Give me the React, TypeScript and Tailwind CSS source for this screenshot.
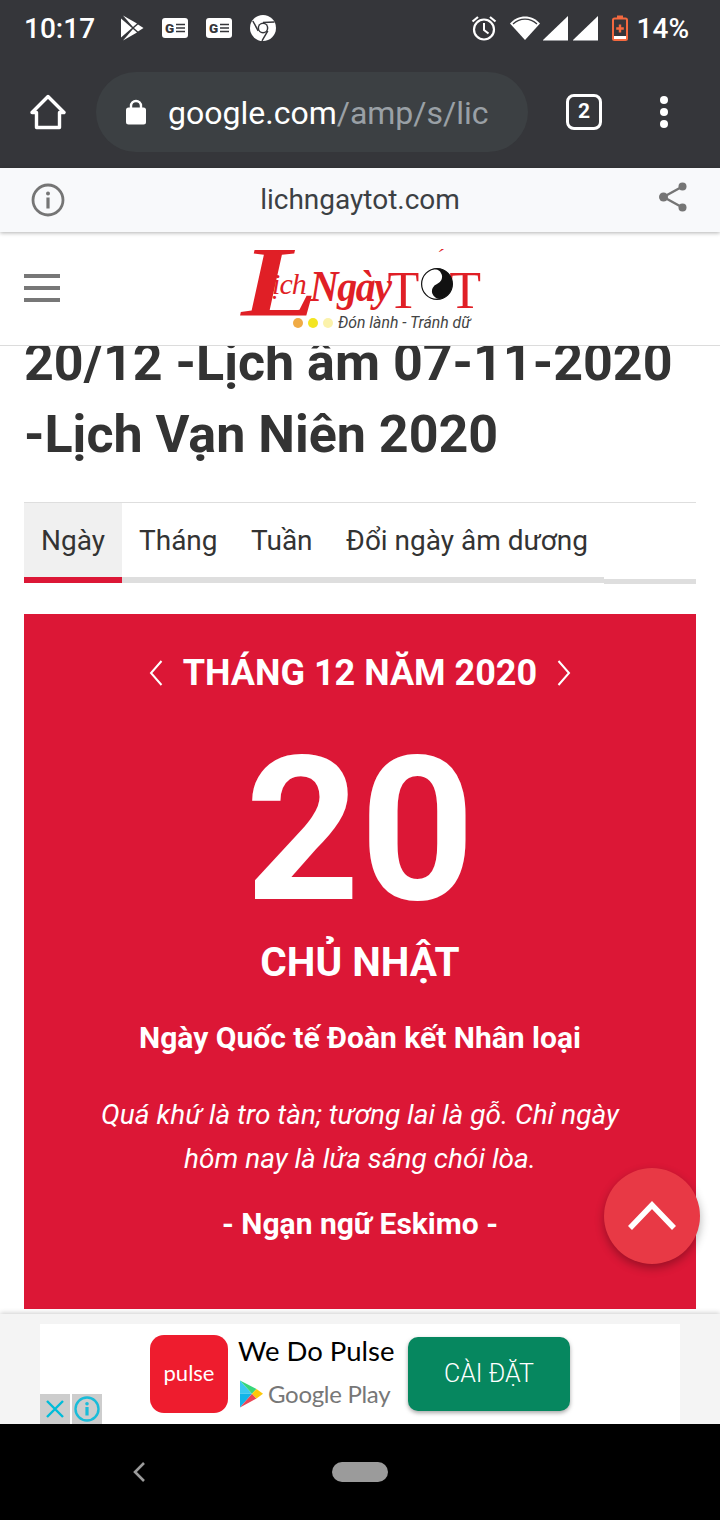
import React from 'react';

const PlayStoreIcon = () => (
  <svg width="24" height="26" viewBox="0 0 24 26">
    <path d="M1 3.5 L12 13 L1 22.5 Z" fill="#fff" />
    <path d="M3 0.5 L17 8.5 L13 12 Z" fill="#fff" />
    <path d="M3 25.5 L17 17.5 L13 14 Z" fill="#fff" />
    <path d="M14 13 L18 9.5 L23.5 13 L18 16.5 Z" fill="#fff" />
  </svg>
);

const NewsIcon = () => (
  <svg width="26" height="20" viewBox="0 0 26 20">
    <rect width="26" height="20" rx="3" fill="#fff" />
    <text x="3" y="15" fontFamily="Roboto, sans-serif" fontWeight="900" fontSize="13.5" fill="#35363a">G</text>
    <path d="M14 6.5h9M14 10h9M14 13.5h9" stroke="#35363a" strokeWidth="1.6" />
  </svg>
);

const ChromeIcon = () => (
  <svg width="26" height="26" viewBox="0 0 26 26">
    <circle cx="13" cy="13" r="13" fill="#fff" />
    <circle cx="13" cy="13" r="5.4" fill="#35363a" />
    <circle cx="13" cy="13" r="3.9" fill="#fff" />
    <path d="M13 7.4 L24.5 7 M8.2 15.8 L2.8 6 M17.8 15.8 L12 25.8" stroke="#35363a" strokeWidth="1.5" />
  </svg>
);

const AlarmIcon = () => (
  <svg width="26" height="26" viewBox="0 0 26 26" fill="none" stroke="#fff">
    <circle cx="13" cy="14.5" r="10" strokeWidth="2.2" />
    <path d="M13 8v7l4.5 3.5" strokeWidth="2" />
    <path d="M1.5 6.5 L7 2 M24.5 6.5 L19 2" strokeWidth="2.2" />
  </svg>
);

const WifiIcon = () => (
  <svg width="30" height="24" viewBox="0 0 30 24">
    <path d="M0 7.5 C8 -2 22 -2 30 7.5 L15 24 Z" fill="#fff" />
    <path d="M3 8 C10 1.5 20 1.5 27 8" fill="none" stroke="#35363a" strokeWidth="1.2" />
  </svg>
);

const SignalIcon = () => (
  <svg width="25" height="25" viewBox="0 0 25 25">
    <path d="M25 0 V24 H0 Z" fill="#fff" />
    <path d="M0 24.5 H25" stroke="#9a9b9e" strokeWidth="1" />
  </svg>
);

const BatteryIcon = () => (
  <svg width="16" height="26" viewBox="0 0 16 26" fill="none">
    <path d="M5 0.5h6v2.5h-6z" fill="#f4693f" />
    <rect x="1" y="3.5" width="14" height="21.5" rx="1.5" stroke="#f4693f" strokeWidth="2" />
    <path d="M8 9.5v8M4.2 13.5h7.6" stroke="#f4693f" strokeWidth="2.4" />
    <rect x="2" y="21" width="12" height="3" fill="#fff" />
  </svg>
);

const HomeIcon = () => (
  <svg width="36" height="36" viewBox="0 0 36 36" fill="none" stroke="#fff" strokeWidth="3.4" strokeLinejoin="round" strokeLinecap="round">
    <path d="M2 18.5 L18 2.5 L34 18.5 L29.5 18.5 V33.5 H6.5 V18.5 Z" />
  </svg>
);

const LockIcon = () => (
  <svg width="20" height="26" viewBox="0 0 20 26">
    <path d="M5 11 V7 a5 5 0 0 1 10 0 V11" fill="none" stroke="#fff" strokeWidth="2.4" />
    <rect y="8.5" width="20" height="17" rx="2.5" fill="#fff" />
  </svg>
);

const InfoIcon = () => (
  <svg width="34" height="34" viewBox="0 0 34 34" fill="none">
    <circle cx="17" cy="17" r="15" stroke="#757575" strokeWidth="2.8" />
    <circle cx="17" cy="10.5" r="2" fill="#757575" />
    <rect x="15.4" y="14.5" width="3.2" height="11" fill="#757575" />
  </svg>
);

const ShareIcon = () => (
  <svg width="28" height="30" viewBox="0 0 28 30" fill="#757575">
    <circle cx="23.5" cy="4.5" r="4" />
    <circle cx="4.5" cy="15" r="4.5" />
    <circle cx="23.5" cy="25.5" r="4" />
    <path d="M23.5 4.5 L4.5 15 L23.5 25.5" fill="none" stroke="#757575" strokeWidth="2.4" />
  </svg>
);

// yin-yang drawn in the "Tốt" lettering
const YinYang = () => (
  <svg width="32" height="32" viewBox="0 0 32 32" className="shrink-0">
    <circle cx="16" cy="16" r="15.4" fill="#fff" stroke="#111" strokeWidth="1.2" />
    <g transform="rotate(-20 16 16)">
      <path d="M16 .6 A15.4 15.4 0 0 0 16 31.4 A7.7 7.7 0 0 0 16 16 A7.7 7.7 0 0 1 16 .6 Z" fill="#111" transform="scale(-1 1) translate(-32 0)" />
      <circle cx="16" cy="8.3" r="2.4" fill="#fff" />
      <circle cx="16" cy="23.7" r="2.4" fill="#111" />
    </g>
  </svg>
);

const Logo = () => (
  <div className="-mt-[2px] flex w-[238px] flex-col">
    <div className="flex h-[68px] items-end text-[#e01f26] [font-family:'Liberation_Serif',serif] italic font-bold leading-none">
      <span className="mb-[-21px] origin-left scale-x-125 text-[100px] leading-[100px]">L</span>
      <span className="-ml-[30px] mb-[12px] text-[30px] font-normal tracking-[-1px]">ịch</span>
      <span className="ml-[4px] mb-[2px] origin-bottom scale-y-110 text-[40px] tracking-[-1.5px]">Ngày</span>
      <span className="mb-[-6px] -ml-[3px] text-[52px] font-normal not-italic leading-[52px]">T</span>
      <span className="relative mb-[11px] ml-[2px]">
        <YinYang />
        <span className="absolute left-[15px] -top-[22px] text-[22px] font-normal">´</span>
      </span>
      <span className="mb-[-6px] -ml-[4px] text-[52px] font-normal not-italic leading-[52px]">T</span>
    </div>
    <div className="mt-[3px] ml-[52px] flex items-center">
      <span className="h-[10px] w-[10px] rounded-full bg-[#f0ab45]" />
      <span className="ml-[5px] h-[10px] w-[10px] rounded-full bg-[#f3e521]" />
      <span className="ml-[5px] h-[10px] w-[10px] rounded-full bg-[#fbf2ab]" />
      <span className="ml-[5px] whitespace-nowrap text-[15.8px] italic leading-[18px] text-[#444] [font-family:Roboto,sans-serif]">Đón lành - Tránh dữ</span>
    </div>
  </div>
);

const Chevron = ({ flip }: { flip?: boolean }) => (
  <svg width="14" height="26" viewBox="0 0 14 26" fill="none" stroke="#fff" strokeWidth="2" className={flip ? 'rotate-180' : ''}>
    <path d="M12.5 1 L2 13 L12.5 25" />
  </svg>
);

const PlayTriangle = () => (
  <svg width="24" height="28" viewBox="0 0 24 28">
    <path d="M1 0.5 V13.8 L13 13.8 Z" fill="#3bc8f0" />
    <path d="M1 13.8 V27.5 L13 13.8 Z" fill="#12b5e8" />
    <path d="M1 0.5 L13 13.8 L17.5 9 Z" fill="#37d67a" />
    <path d="M1 27.5 L13 13.8 L17.5 18.5 Z" fill="#ea4656" />
    <path d="M17.5 9 L13 13.8 L17.5 18.5 L24 13.8 Z" fill="#fdc80a" />
  </svg>
);

const tabs = ['Tháng', 'Tuần', 'Đổi ngày âm dương'];

export default function App() {
  return (
    <div className="relative flex h-[1520px] w-[720px] flex-col overflow-hidden bg-white [font-family:Roboto,sans-serif]">
      {/* browser chrome */}
      <div className="h-[168px] shrink-0 bg-[#35363a]">
        <div className="flex h-[56px] items-center px-[24px] text-white">
          <span className="w-[96px] pt-[2px] text-[28px] font-medium leading-none">10:17</span>
          <span className="-mt-[1px]"><PlayStoreIcon /></span>
          <span className="ml-[18px]"><NewsIcon /></span>
          <span className="ml-[18px]"><NewsIcon /></span>
          <span className="ml-[18px]"><ChromeIcon /></span>
          <span className="ml-auto"><AlarmIcon /></span>
          <span className="ml-[13px]"><WifiIcon /></span>
          <span className="ml-[3px]"><SignalIcon /></span>
          <span className="ml-[5px]"><SignalIcon /></span>
          <span className="ml-[14px]"><BatteryIcon /></span>
          <span className="ml-[9px] mr-[7px] pt-[2px] text-[28px] font-medium leading-none">14%</span>
        </div>
        <div className="mt-[16px] flex h-[80px] items-center pl-[30px]">
          <HomeIcon />
          <div className="ml-[30px] flex h-[80px] w-[432px] items-center rounded-full bg-[#3c4043] pl-[30px]">
            <LockIcon />
            <div className="ml-[22px] mt-[2px] whitespace-nowrap text-[32px] leading-none text-[#9aa0a6]">
              <span className="text-white">google.com</span>/amp/s/lic
            </div>
          </div>
          <div className="ml-[38px] flex h-[36px] w-[36px] items-center justify-center rounded-[8px] border-[3.5px] border-white text-[21px] font-bold text-white">2</div>
          <div className="ml-[58px] flex flex-col gap-[4px]">
            <span className="h-[8px] w-[8px] rounded-full bg-white" />
            <span className="h-[8px] w-[8px] rounded-full bg-white" />
            <span className="h-[8px] w-[8px] rounded-full bg-white" />
          </div>
        </div>
      </div>

      {/* amp viewer bar */}
      <div className="relative z-20 flex h-[64px] shrink-0 items-center bg-[#f8f9fb] pl-[31px] pr-[33px] shadow-[0_1px_4px_rgba(0,0,0,0.3)]">
        <span className="w-[50px]"><InfoIcon /></span>
        <span className="flex-1 text-center text-[28px] leading-[36px] text-[#3c4043]">lichngaytot.com</span>
        <span className="-mt-[6px] flex w-[48px] justify-end"><ShareIcon /></span>
      </div>

      {/* site header */}
      <div className="relative z-10 flex h-[114px] shrink-0 items-center justify-center border-b border-[#dcdcdc] bg-white">
        <div className="absolute left-[24px] top-[42px] flex w-[36px] flex-col gap-[8px]">
          <span className="h-[4px] bg-[#777]" />
          <span className="h-[4px] bg-[#777]" />
          <span className="h-[4px] bg-[#777]" />
        </div>
        <Logo />
      </div>

      {/* scrolled article */}
      <div className="h-[968px] shrink-0 overflow-hidden px-[24px]">
        <h1 className="-mt-[19px] whitespace-nowrap text-[52px] font-bold leading-[72px] text-[#333]">
          20/12 -Lịch âm 07-11-2020
          <br />
          -Lịch Vạn Niên 2020
        </h1>
        <div className="mt-[31px] flex h-[81px] border-t border-[#dedede]">
          <div className="flex h-full w-[98px] items-center justify-center border-b-[6px] border-[#dc1736] bg-[#f0f0f0] pt-[2px] text-[28px] text-[#333]">Ngày</div>
          <div className="flex h-full w-[482px] items-center border-b-[6px] border-[#dedede] pl-[17px] pt-[2px] text-[28px] text-[#333]">
            {tabs.map((t) => (
              <span key={t} className="mr-[33.5px] whitespace-nowrap">{t}</span>
            ))}
          </div>
          <div className="h-[81px] flex-1 border-b-[5px] border-[#dedede]" />
        </div>

        <div className="mt-[31px] flex h-[695px] flex-col items-center bg-[#dc1736] text-white">
          <div className="mt-[39px] flex h-[40px] items-center">
            <Chevron />
            <span className="mx-[20px] whitespace-nowrap text-[36px] font-bold leading-none">THÁNG 12 NĂM 2020</span>
            <Chevron flip />
          </div>
          <div className="mt-[38px] text-[200px] font-bold leading-[200px]">20</div>
          <div className="mt-[5px] text-[40.5px] font-bold leading-[52px]">CHỦ NHẬT</div>
          <div className="mt-[30px] text-[30px] font-bold leading-[40px]">Ngày Quốc tế Đoàn kết Nhân loại</div>
          <div className="mt-[35px] w-[540px] text-center text-[28px] italic leading-[44px]">
            Quá khứ là tro tàn; tương lai là gỗ. Chỉ ngày hôm nay là lửa sáng chói lòa.
          </div>
          <div className="mt-[23px] text-[30px] font-bold leading-[40px]">- Ngạn ngữ Eskimo -</div>
        </div>
      </div>

      {/* ad banner */}
      <div className="relative z-10 flex h-[110px] shrink-0 justify-center bg-[#f4f4f4] pt-[10px] shadow-[0_-1px_5px_rgba(0,0,0,0.2)]">
        <div className="relative flex h-[100px] w-[640px] items-start bg-white pl-[110px] pt-[11px]">
          <div className="flex h-[78px] w-[78px] items-center justify-center rounded-[14px] bg-[#ee1c2e] pb-[2px] text-[22px] leading-none text-white [font-family:Lato,sans-serif]">pulse</div>
          <div className="ml-[10px] w-[170px]">
            <div className="-mt-[1px] whitespace-nowrap text-[27.5px] leading-[34px] text-black [font-family:Lato,sans-serif]">We Do Pulse</div>
            <div className="mt-[12px] flex items-center">
              <span className="ml-[1px]"><PlayTriangle /></span>
              <span className="ml-[5px] whitespace-nowrap text-[24px] font-normal leading-none tracking-[-0.3px] text-[#777] [font-family:Lato,sans-serif]">Google Play</span>
            </div>
          </div>
          <div className="mt-[2px] flex h-[74px] w-[162px] items-center justify-center rounded-[10px] bg-[#06875f] text-[25px] font-light text-white shadow-[0_2px_4px_rgba(0,0,0,0.35)]">CÀI ĐẶT</div>
          <div className="absolute bottom-0 left-0 flex gap-[2px]">
            <div className="flex h-[30px] w-[30px] items-center justify-center bg-[#cdcdcd]">
              <svg width="20" height="20" viewBox="0 0 20 20" stroke="#00bcd9" strokeWidth="2.4"><path d="M2 2 L18 18 M18 2 L2 18" /></svg>
            </div>
            <div className="flex h-[30px] w-[30px] items-center justify-center bg-[#cdcdcd]">
              <svg width="26" height="26" viewBox="0 0 26 26" fill="none">
                <circle cx="13" cy="13" r="11.5" stroke="#19bcd9" strokeWidth="2.4" />
                <circle cx="13" cy="7.8" r="1.8" fill="#19bcd9" />
                <rect x="11.4" y="11" width="3.2" height="8.5" fill="#19bcd9" />
              </svg>
            </div>
          </div>
        </div>
      </div>

      {/* android nav bar */}
      <div className="relative flex flex-1 items-center justify-center bg-black">
        <svg width="14" height="22" viewBox="0 0 14 22" fill="none" stroke="#9b9b9b" strokeWidth="2.6" className="absolute left-[132px] top-[37px]">
          <path d="M12 2 L3 11 L12 20" />
        </svg>
        <div className="h-[20px] w-[56px] rounded-full bg-[#9b9b9b]" />
      </div>

      {/* back-to-top button */}
      <button className="absolute left-[604px] top-[1168px] z-30 flex h-[96px] w-[96px] items-center justify-center rounded-full bg-[#e83945] shadow-[0_4px_10px_rgba(0,0,0,0.3)]">
        <svg width="48" height="30" viewBox="0 0 48 30" fill="none" stroke="#fff" strokeWidth="5.5">
          <path d="M2 27 L24 4 L46 27" />
        </svg>
      </button>
    </div>
  );
}
